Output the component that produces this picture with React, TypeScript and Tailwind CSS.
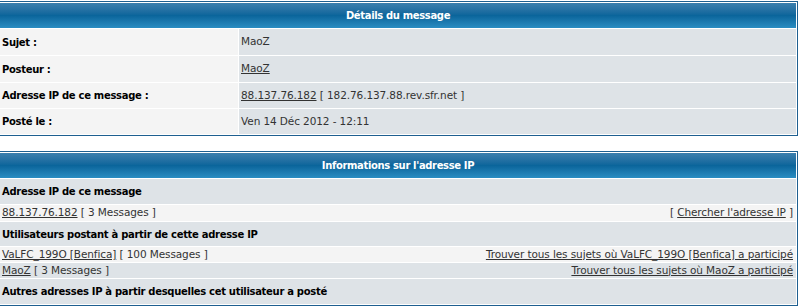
import React from "react";

const font = { fontFamily: '"DejaVu Sans", Verdana, sans-serif' };

function Header({ children }: { children: React.ReactNode }) {
  return (
    <div className="h-[25px] flex items-center justify-center text-white font-bold text-[10px] tracking-[-0.35px] bg-gradient-to-b from-[#3a7fae] via-[#0a659b] to-[#2a8dc2]">
      {children}
    </div>
  );
}

function DetailRow({ label, h, children }: { label: string; h: string; children: React.ReactNode }) {
  return (
    <div className={`grid grid-cols-[238px_1fr] gap-px ${h}`}>
      <div className="bg-[#f4f4f4] flex items-center pl-[2px] font-bold text-black text-[10px] tracking-[-0.3px]">{label}</div>
      <div className="bg-[#dee3e7] flex items-center pl-[2px] text-[#333]">{children}</div>
    </div>
  );
}

const A = ({ children }: { children: React.ReactNode }) => (
  <span className="underline text-[#333]">{children}</span>
);

export default function App() {
  return (
    <div className="w-[799px] h-[307px] bg-white text-[10.5px] tracking-[-0.1px] text-[#333] overflow-hidden" style={font}>
      <div className="mt-px w-[798px] border-t border-r border-b border-[#1e5f90] bg-white p-px pl-0 flex flex-col gap-px">
        <Header>Détails du message</Header>
        <DetailRow label="Sujet :" h="h-[26px]">MaoZ</DetailRow>
        <DetailRow label="Posteur :" h="h-[26px]">
          <A>MaoZ</A>
        </DetailRow>
        <DetailRow label="Adresse IP de ce message :" h="h-[25px]">
          <A>88.137.76.182</A>
          <span>&nbsp;[ 182.76.137.88.rev.sfr.net ]</span>
        </DetailRow>
        <DetailRow label="Posté le :" h="h-[25px]">Ven 14 Déc 2012 - 12:11</DetailRow>
      </div>

      <div className="mt-[15px] w-[798px] border-t border-r border-b border-[#1e5f90] bg-white p-px pl-0 flex flex-col gap-px">
        <Header>Informations sur l'adresse IP</Header>
        <div className="h-[25px] bg-[#dee3e7] flex items-center pl-[2px] font-bold text-black text-[10px] tracking-[-0.3px]">
          Adresse IP de ce message
        </div>
        <div className="h-[16px] bg-[#f4f4f4] flex items-center justify-between pl-[2px] pr-[3px]">
          <span>
            <A>88.137.76.182</A> [ 3 Messages ]
          </span>
          <span>
            [ <A>Chercher l'adresse IP</A> ]
          </span>
        </div>
        <div className="h-[24px] bg-[#dee3e7] flex items-center pl-[2px] font-bold text-black text-[10px] tracking-[-0.3px]">
          Utilisateurs postant à partir de cette adresse IP
        </div>
        <div className="h-[15px] bg-[#f4f4f4] flex items-center justify-between pl-[2px] pr-[3px]">
          <span>
            <A>VaLFC_199O [Benfica]</A> [ 100 Messages ]
          </span>
          <A>Trouver tous les sujets où VaLFC_199O [Benfica] a participé</A>
        </div>
        <div className="h-[15px] bg-[#dee3e7] flex items-center justify-between pl-[2px] pr-[3px]">
          <span>
            <A>MaoZ</A> [ 3 Messages ]
          </span>
          <A>Trouver tous les sujets où MaoZ a participé</A>
        </div>
        <div className="h-[25px] bg-[#dee3e7] flex items-center pl-[2px] font-bold text-black text-[10px] tracking-[-0.3px]">
          Autres adresses IP à partir desquelles cet utilisateur a posté
        </div>
      </div>
    </div>
  );
}
